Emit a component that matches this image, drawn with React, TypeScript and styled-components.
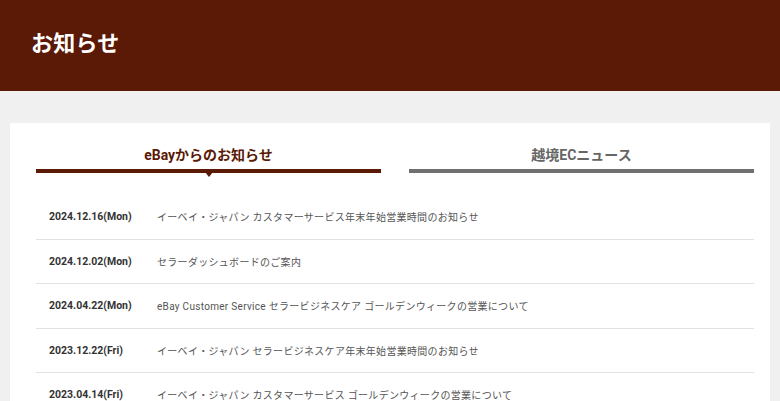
import React from 'react';
import styled, {createGlobalStyle} from "styled-components";

const GlobalStyle = createGlobalStyle`
    body {
        margin: 0;
        background-color: #f0f0f0;
        font-family: "Noto Sans CJK JP", "Noto Sans", sans-serif;
    }
    * {
        box-sizing: border-box;
    }
`

type Tab = { label: string; active?: boolean };
type News = { date: string; day: string; title: string };

const tabs: Tab[] = [
    {label: "eBayからのお知らせ", active: true},
    {label: "越境ECニュース"},
];

const news: News[] = [
    {date: "2024.12.16", day: "Mon", title: "イーベイ・ジャパン カスタマーサービス年末年始営業時間のお知らせ"},
    {date: "2024.12.02", day: "Mon", title: "セラーダッシュボードのご案内"},
    {date: "2024.04.22", day: "Mon", title: "eBay Customer Service セラービジネスケア ゴールデンウィークの営業について"},
    {date: "2023.12.22", day: "Fri", title: "イーベイ・ジャパン セラービジネスケア年末年始営業時間のお知らせ"},
    {date: "2023.04.14", day: "Fri", title: "イーベイ・ジャパン カスタマーサービス ゴールデンウィークの営業について"},
];

export default function App() {
    return (
        <>
            <GlobalStyle/>
            <PageHeader>
                <PageTitle>お知らせ</PageTitle>
            </PageHeader>
            <Main>
                <Card>
                    <TabList>
                        {tabs.map(tab => (
                            <TabButton key={tab.label} $active={!!tab.active}>{tab.label}</TabButton>
                        ))}
                    </TabList>
                    <NewsList>
                        {news.map(item => (
                            <NewsRow key={item.date}>
                                <NewsDate>{item.date}({item.day})</NewsDate>
                                <NewsTitle>{item.title}</NewsTitle>
                            </NewsRow>
                        ))}
                    </NewsList>
                </Card>
            </Main>
        </>
    );
}

const PageHeader = styled.header`
    height: 91px;
    background-color: #5a1a06;
    display: flex;
    align-items: center;
    padding: 0 31px 9px;
`

const PageTitle = styled.h1`
    margin: 0;
    font: 700 22px "Noto Sans CJK JP", sans-serif;
    color: #fff;
    letter-spacing: 0.01em;
`

const Main = styled.main`
    padding: 32px 10px 0;
`

const Card = styled.section`
    background-color: #fff;
    padding: 22px 16px 0 26px;
`

const TabList = styled.div`
    display: grid;
    grid-template-columns: 1fr 1fr;
    gap: 28px;
`

const TabButton = styled.div<{ $active: boolean }>`
    position: relative;
    text-align: center;
    font: 700 14px/20px "Roboto", "Noto Sans CJK JP", sans-serif;
    color: ${p => p.$active ? "#5a1a06" : "#666"};
    padding-bottom: 4px;
    border-bottom: 4px solid ${p => p.$active ? "#5a1a06" : "#707070"};
    cursor: pointer;

    &::after {
        content: '';
        display: ${p => p.$active ? "block" : "none"};
        position: absolute;
        left: 50%;
        bottom: -8px;
        transform: translateX(-50%);
        border-left: 4px solid transparent;
        border-right: 4px solid transparent;
        border-top: 5px solid #5a1a06;
    }
`

const NewsList = styled.ul`
    list-style: none;
    margin: 22px 0 0;
    padding: 0;
`

const NewsRow = styled.li`
    display: flex;
    align-items: center;
    height: 44.5px;
    border-bottom: 1px solid #e2e2e2;
`

const NewsDate = styled.span`
    flex: 0 0 121px;
    padding-left: 13px;
    font: 700 10.5px "Roboto", "Noto Sans CJK JP", sans-serif;
    color: #333;
    white-space: nowrap;
`

const NewsTitle = styled.span`
    font: 400 10px "Roboto", "Noto Sans CJK JP", sans-serif;
    letter-spacing: 0.03em;
    color: #555;
    white-space: nowrap;
    overflow: hidden;
`
